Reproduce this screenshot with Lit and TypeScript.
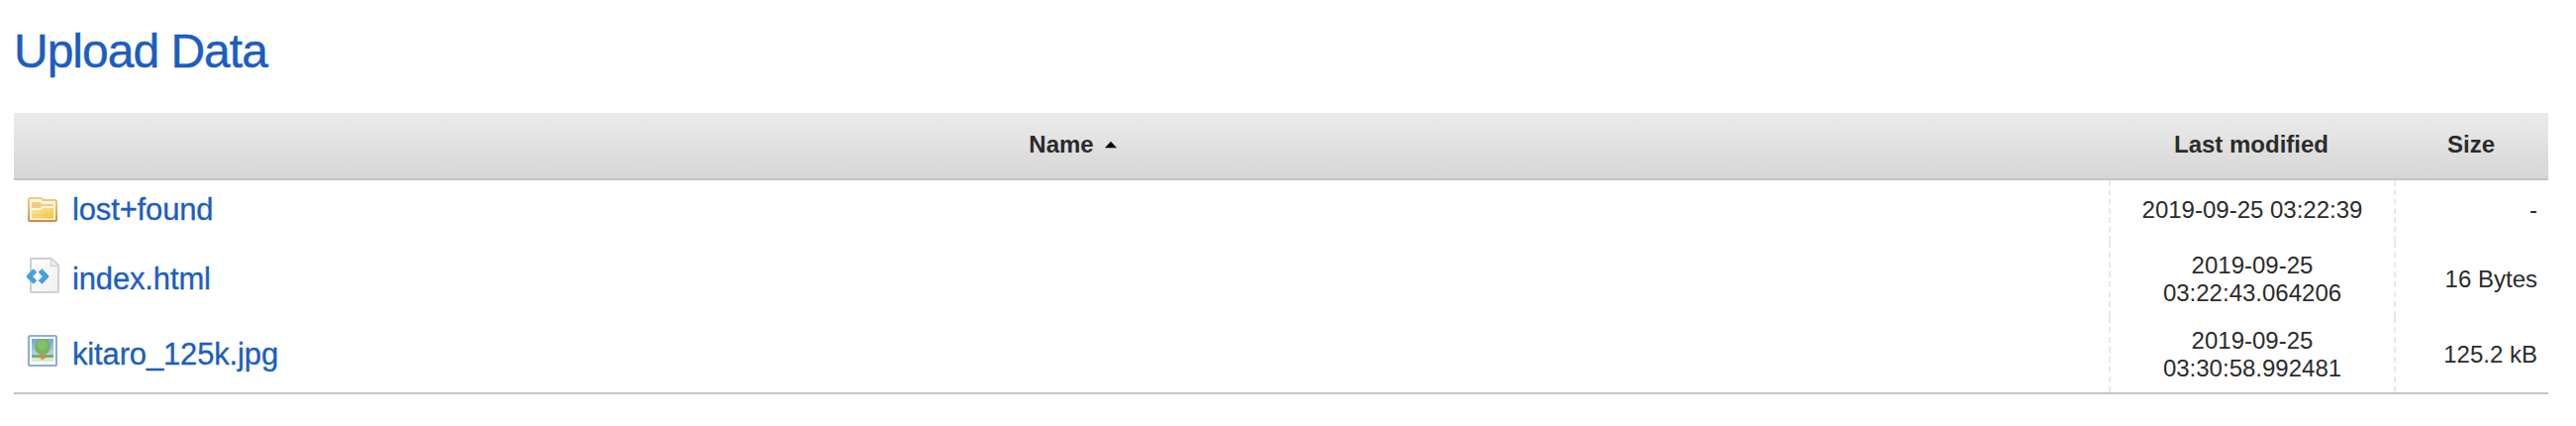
import { LitElement, html, css, svg, nothing } from "lit";
import { customElement, property } from "lit/decorators.js";

type Kind = "folder" | "code" | "image";
interface Entry { kind: Kind; name: string; modified: string[]; size: string; }

const entries: Entry[] = [
  { kind: "folder", name: "lost+found", modified: ["2019-09-25 03:22:39"], size: "-" },
  { kind: "code", name: "index.html", modified: ["2019-09-25", "03:22:43.064206"], size: "16 Bytes" },
  { kind: "image", name: "kitaro_125k.jpg", modified: ["2019-09-25", "03:30:58.992481"], size: "125.2 kB" },
];

const icons = {
  folder: svg`
    <defs>
      <linearGradient id="edge" x1="0" y1="0" x2="0" y2="1"><stop offset="0" stop-color="#ebcb8c"/><stop offset=".6" stop-color="#e8ac60"/><stop offset="1" stop-color="#dc844a"/></linearGradient>
      <linearGradient id="front" x1="0" y1="0" x2="1" y2="1"><stop offset="0" stop-color="#fbe8a8"/><stop offset="1" stop-color="#f3c237"/></linearGradient>
    </defs>
    <path d="M3 26V7.500Q3 6 4.500 6H15.500Q16.500 6 17.500 8H29.500Q31 8 31 9.500V27.500Q31 29 29.500 29H4.500Q3 29 3 27.500Z" fill="#fff6dc" stroke="url(#edge)" stroke-width="2"/>
    <path d="M6 10H14.500L16.500 12H28V14H17L14 16H6Z" fill="#f0cc83"/>
    <path d="M6 18H14.500L17 16H28V26.500H6Z" fill="url(#front)"/>`,
  code: svg`
    <defs><linearGradient id="sheet" x1="0" y1="0" x2="1" y2="1"><stop offset="0" stop-color="#fff"/><stop offset="1" stop-color="#efefef"/></linearGradient></defs>
    <path d="M5 1H26L33 8V34Q33 35 32 35H6Q5 35 5 34Z" fill="url(#sheet)" stroke="#cfcfcf" stroke-width="2"/>
    <path d="M25.500 1.500V8.500H32.500" fill="#f1f1f1" stroke="#d4d4d4" stroke-width="1.500"/>
    <path d="M9.500 13L3.500 19L9.500 25M14.500 13L20.500 19L14.500 25" fill="none" stroke="#479fdf" stroke-width="5.200" stroke-linejoin="round"/>`,
  image: svg`
    <defs><linearGradient id="sky" x1="0" y1="0" x2="0" y2="1"><stop offset="0" stop-color="#72a3dc"/><stop offset="1" stop-color="#b5d6f2"/></linearGradient></defs>
    <rect x="3" y="3" width="28" height="30" rx="1.500" fill="#fff" stroke="#91aed6" stroke-width="2.200"/>
    <rect x="6" y="6" width="22" height="17" fill="url(#sky)"/>
    <rect x="6" y="22" width="22" height="3" fill="#79ae63"/>
    <rect x="6" y="25" width="22" height="4" fill="#d8ead4"/>
    <path d="M15 18H19L19.500 22L22 25L19 25.500L17 27.500L15 25.500L12 25L14.500 22Z" fill="#c98f56"/>
    <circle cx="17" cy="14" r="8" fill="#76b657"/>
    <circle cx="16.500" cy="12.500" r="5" fill="#86c166"/>`,
};

@customElement("file-row")
class FileRow extends LitElement {
  @property({ attribute: false }) entry!: Entry;

  static styles = css`
    :host { display: grid; grid-template-columns: 2116px 288px 156px; }
    .cell { display: flex; align-items: center; }
    .name { padding-left: 10px; color: #1b5dc2; font-size: 31px; letter-spacing: -0.15px; }
    .icon { width: 36px; height: 36px; flex: none; margin: 0 11px 0 2px; }
    .icon.folder { margin-top: -1px; }
    .icon.code { margin-top: -8px; }
    .icon.image { margin-top: -8px; }
    .label { line-height: 36px; -webkit-text-stroke: 0.3px; }
    .date, .size { border-left: 2px dashed #e9e9e9; line-height: 28px; }
    .date { flex-direction: column; justify-content: center; }
    .size { justify-content: flex-end; padding-right: 11px; }
    .short { padding-bottom: 2px; }
  `;

  render() {
    const e = this.entry;
    const short = e.modified.length === 1 ? "short" : "";
    return html`
      <div class="cell name ${short}">
        <svg class="icon ${e.kind}" viewBox="0 0 36 36">${icons[e.kind]}</svg>
        <span class="label">${e.name}</span>
      </div>
      <div class="cell date ${short}">${e.modified.map((m) => html`<span>${m}</span>`)}</div>
      <div class="cell size ${short}">${e.size}</div>`;
  }
}

@customElement("app-root")
class AppRoot extends LitElement {
  static styles = css`
    :host { display: block; box-sizing: border-box; height: 430px; padding: 24px 28px 0 14px; background: #fff;
      font: 24px/28px "Liberation Sans", Arial, sans-serif; color: #2b2b2b; }
    h1 { margin: 0 0 34px; font-size: 48px; font-weight: 400; line-height: 56px; letter-spacing: -1px; color: #1b5dc2;
      -webkit-text-stroke: 0.4px; }
    .table { display: grid; grid-template-rows: 68px 62px 76px 78px; }
    .head { display: grid; grid-template-columns: 2116px 288px 156px; align-items: center; box-sizing: border-box;
      padding-bottom: 2px; border-bottom: 2px solid #c4c4c4; background: linear-gradient(#ebebeb, #d6d6d6);
      font-weight: 700; text-align: center; }
    .sort { display: grid; grid-template-columns: 1fr auto 1fr; align-items: center; }
    .arrow { grid-column: 3; width: 12px; height: 8px; margin-left: 11px; fill: #000; }
    .title { grid-column: 2; }
    .last { border-bottom: 2px solid #c4c4c4; }
  `;

  render() {
    return html`
      <h1>Upload Data</h1>
      <div class="table">
        <div class="head">
          <div class="sort"><span class="title">Name</span><svg class="arrow" viewBox="0 0 12 8"><path d="M0 7.200L6 .8L12 7.200Z"/></svg></div>
          <div>Last modified</div>
          <div>Size</div>
        </div>
        ${entries.map((e, i) => html`<file-row class=${i === entries.length - 1 ? "last" : nothing} .entry=${e}></file-row>`)}
      </div>`;
  }
}
